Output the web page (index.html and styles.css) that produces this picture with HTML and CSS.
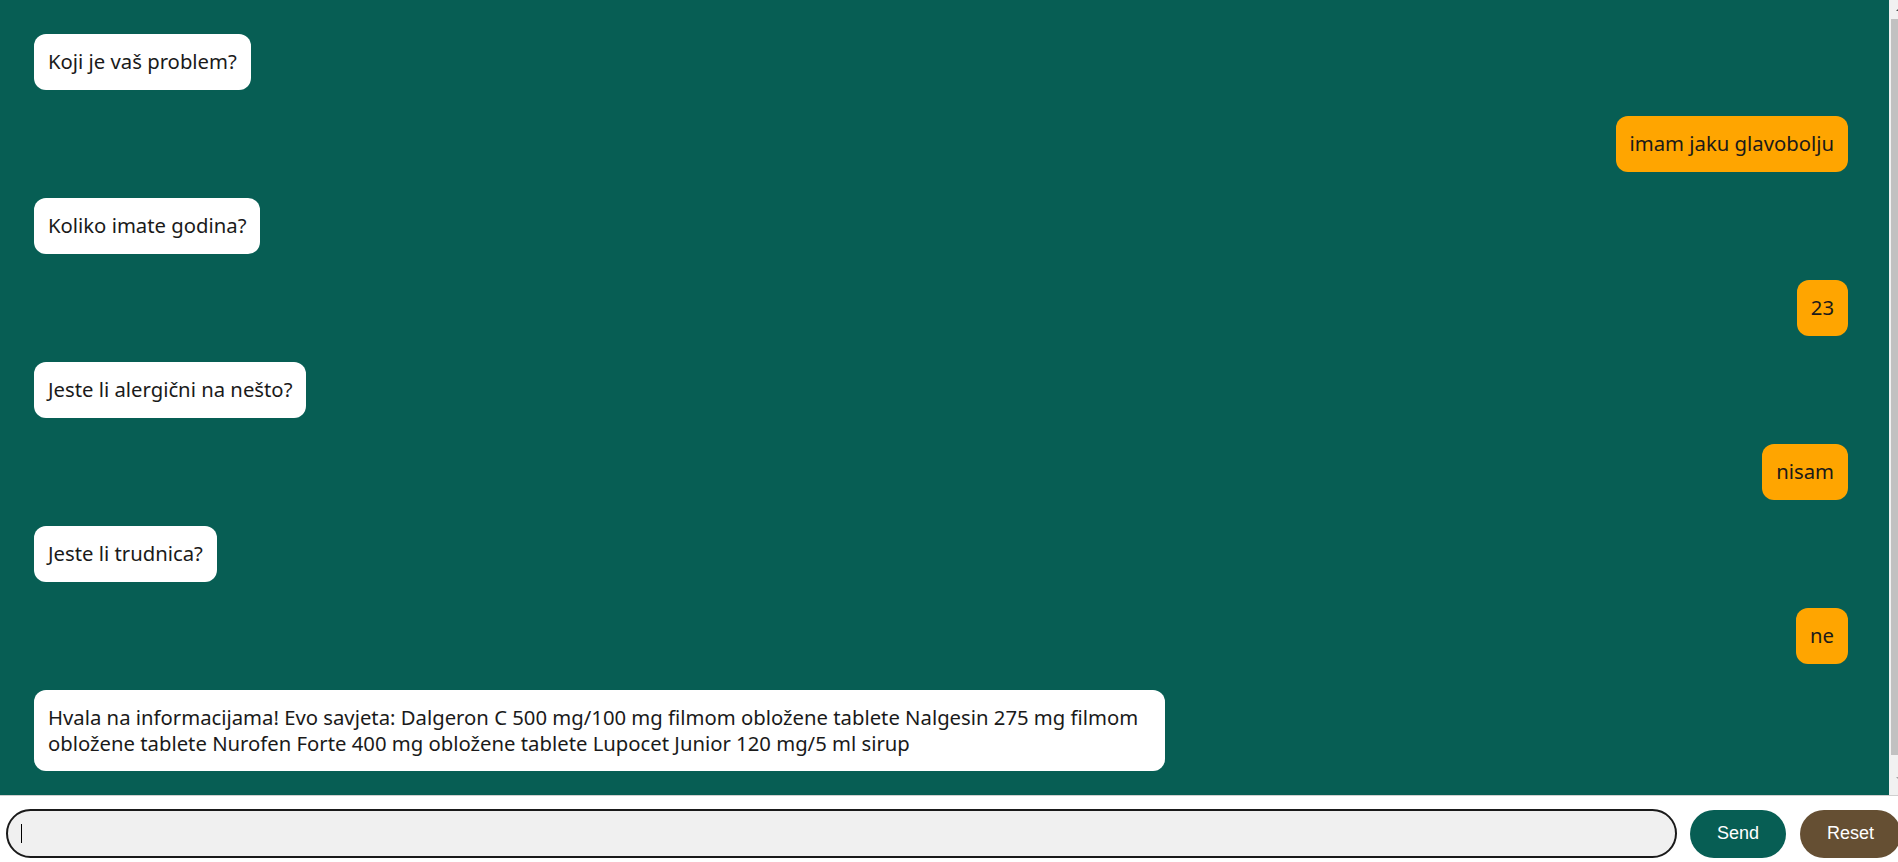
FILE: index.html
```html
<!DOCTYPE html>
<html lang="hr">
<head>
<meta charset="utf-8">
<title>Chat</title>
<link rel="stylesheet" href="styles.css">
</head>
<body>
<div class="app">
  <div class="chat">
    <div class="messages">
      <div class="msg bot">Koji je vaš problem?</div>
      <div class="msg user">imam jaku glavobolju</div>
      <div class="msg bot">Koliko imate godina?</div>
      <div class="msg user">23</div>
      <div class="msg bot">Jeste li alergični na nešto?</div>
      <div class="msg user">nisam</div>
      <div class="msg bot">Jeste li trudnica?</div>
      <div class="msg user">ne</div>
      <div class="msg bot">Hvala na informacijama! Evo savjeta: Dalgeron C 500 mg/100 mg filmom obložene tablete Nalgesin 275 mg filmom obložene tablete Nurofen Forte 400 mg obložene tablete Lupocet Junior 120 mg/5 ml sirup</div>
    </div>
    <div class="scrollbar">
      <span class="arrow up"></span>
      <span class="thumb"></span>
      <span class="arrow down"></span>
    </div>
  </div>
  <div class="controls">
    <div class="field">
      <input class="input" type="text" autofocus>
      <span class="caret"></span>
    </div>
    <button class="btn send">Send</button>
    <button class="btn reset">Reset</button>
  </div>
</div>
</body>
</html>
```
FILE: styles.css
```css
html {
  overflow: hidden;
}
body {
  margin: 0;
  background: #ffffff;
}
.app {
  width: 1910px;
}
.chat {
  display: flex;
  height: 796px;
  box-sizing: border-box;
  background: #075e54;
  border-bottom: 1px solid #cfcfcf;
  overflow: hidden;
}
.messages {
  flex: 1;
  display: flex;
  flex-direction: column;
  gap: 26.5px;
  padding: 34px 41px 48px 34px;
}
.scrollbar {
  width: 21px;
  flex: none;
  background: #f1f1f1;
  display: flex;
  flex-direction: column;
  align-items: center;
}
.arrow {
  width: 0;
  height: 0;
  border-left: 4px solid transparent;
  border-right: 4px solid transparent;
}
.arrow.up {
  margin-top: 7px;
  margin-bottom: 8px;
  border-bottom: 4px solid #505050;
}
.arrow.down {
  margin-top: 22px;
  border-top: 4px solid #a3a3a3;
}
.thumb {
  width: 17px;
  height: 736px;
  background: #c1c1c1;
}
.msg {
  font-family: "Noto Sans", "Open Sans", sans-serif;
  font-size: 20.3px;
  line-height: 25.5px;
  color: #1a1a1a;
  padding: 15px 14px;
  border-radius: 12px;
  max-width: 1131px;
  box-sizing: border-box;
}
.bot {
  align-self: flex-start;
  background: #ffffff;
}
.user {
  align-self: flex-end;
  background: #ffa500;
}
.controls {
  display: flex;
  align-items: center;
  padding: 13px 0 12px 6px;
}
.field {
  position: relative;
  display: flex;
}
.input {
  width: 1671px;
  height: 49px;
  box-sizing: border-box;
  border: 2.5px solid #1a1a1a;
  border-radius: 25px;
  background: #f0f0f0;
  padding: 0 14px;
  font-family: "Liberation Sans", Arial, sans-serif;
  font-size: 18px;
  outline: none;
}
.caret {
  position: absolute;
  left: 15px;
  top: 15px;
  width: 1px;
  height: 19px;
  background: #000000;
}
.btn {
  height: 48px;
  border: none;
  border-radius: 24px;
  color: #ffffff;
  font-family: "Liberation Sans", Arial, sans-serif;
  font-size: 18px;
  padding: 0 27px;
}
.send {
  margin-left: 13px;
  width: 96px;
  background: #075e54;
}
.reset {
  margin-left: 14px;
  width: 101px;
  background: #654f33;
}
```
